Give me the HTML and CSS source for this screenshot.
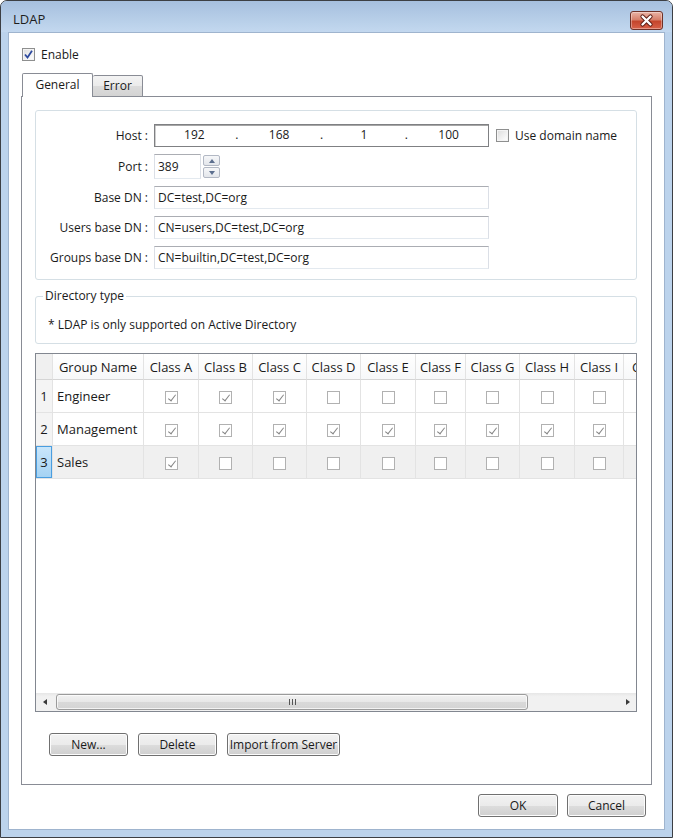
FILE: index.html
```html
<!DOCTYPE html>
<html lang="en">
<head>
  <meta charset="UTF-8" />
  <title>LDAP</title>
  <link rel="stylesheet" href="styles.css">
</head>
<body>

  <div class="window">
    <div class="titlebar">
      <span class="title">LDAP</span>
      <span class="close">
        <svg width="33" height="19" viewBox="0 0 33 19">
          <path d="M12.5 5.5 L20.5 13.5 M20.5 5.5 L12.5 13.5" stroke="#5a1a12" stroke-width="4.2" stroke-linecap="round"/>
          <path d="M12.5 5.5 L20.5 13.5 M20.5 5.5 L12.5 13.5" stroke="#ffffff" stroke-width="2.4" stroke-linecap="round"/>
        </svg>
      </span>
    </div>

    <div class="client">
      <label class="enable">
        <span class="chk">
          <svg width="11" height="11" viewBox="0 0 11 11">
            <path d="M2 5.5 L4.5 8.5 L9 1.8" fill="none" stroke="#2e4a9e" stroke-width="1.8"/>
          </svg>
        </span>
        Enable
      </label>

      <div class="tabs">
        <div class="tab active">General</div>
        <div class="tab">Error</div>
      </div>

      <div class="pane">
        <div class="group conn">
          <span class="lbl">Host :</span>
          <div class="ip">
            <span class="seg">192</span><span class="dot">.</span>
            <span class="seg">168</span><span class="dot">.</span>
            <span class="seg">1</span><span class="dot">.</span>
            <span class="seg">100</span>
          </div>
          <label class="domain"><span class="chk"></span>Use domain name</label>

          <span class="lbl">Port :</span>
          <div class="port">
            <span class="field small">389</span>
            <span class="spin">
              <span class="spin-btn"><i class="up"></i></span>
              <span class="spin-btn"><i class="down"></i></span>
            </span>
          </div>
          <span></span>

          <span class="lbl">Base DN :</span>
          <span class="field">DC=test,DC=org</span>
          <span></span>

          <span class="lbl">Users base DN :</span>
          <span class="field">CN=users,DC=test,DC=org</span>
          <span></span>

          <span class="lbl">Groups base DN :</span>
          <span class="field">CN=builtin,DC=test,DC=org</span>
          <span></span>
        </div>

        <fieldset class="dirtype">
          <legend>Directory type</legend>
          <p>* LDAP is only supported on Active Directory</p>
        </fieldset>

        <div class="grid">
          <div class="grid-view">
            <table>
              <thead>
                <tr>
                  <th class="rh"></th>
                  <th class="c-name">Group Name</th>
                  <th class="c55">Class A</th>
                  <th class="c54">Class B</th>
                  <th class="c54">Class C</th>
                  <th class="c54">Class D</th>
                  <th class="c55">Class E</th>
                  <th class="c50">Class F</th>
                  <th class="c54">Class G</th>
                  <th class="c55">Class H</th>
                  <th class="c49">Class I</th>
                  <th class="c55">Class J</th>
                </tr>
              </thead>
              <tbody>
                <tr>
                  <td class="rh">1</td>
                  <td class="name">Engineer</td>
                  <td><span class="cb on"></span></td>
                  <td><span class="cb on"></span></td>
                  <td><span class="cb on"></span></td>
                  <td><span class="cb"></span></td>
                  <td><span class="cb"></span></td>
                  <td><span class="cb"></span></td>
                  <td><span class="cb"></span></td>
                  <td><span class="cb"></span></td>
                  <td><span class="cb"></span></td>
                  <td><span class="cb"></span></td>
                </tr>
                <tr>
                  <td class="rh">2</td>
                  <td class="name">Management</td>
                  <td><span class="cb on"></span></td>
                  <td><span class="cb on"></span></td>
                  <td><span class="cb on"></span></td>
                  <td><span class="cb on"></span></td>
                  <td><span class="cb on"></span></td>
                  <td><span class="cb on"></span></td>
                  <td><span class="cb on"></span></td>
                  <td><span class="cb on"></span></td>
                  <td><span class="cb on"></span></td>
                  <td><span class="cb"></span></td>
                </tr>
                <tr class="selected">
                  <td class="rh">3</td>
                  <td class="name">Sales</td>
                  <td><span class="cb on"></span></td>
                  <td><span class="cb"></span></td>
                  <td><span class="cb"></span></td>
                  <td><span class="cb"></span></td>
                  <td><span class="cb"></span></td>
                  <td><span class="cb"></span></td>
                  <td><span class="cb"></span></td>
                  <td><span class="cb"></span></td>
                  <td><span class="cb"></span></td>
                  <td><span class="cb"></span></td>
                </tr>
              </tbody>
            </table>
          </div>

          <div class="hscroll">
            <span class="arrow"><i class="left"></i></span>
            <span class="track">
              <span class="thumb"><span class="grip"></span></span>
            </span>
            <span class="arrow"><i class="right"></i></span>
          </div>
        </div>

        <div class="actions">
          <button class="btn w79">New...</button>
          <button class="btn w79">Delete</button>
          <button class="btn w113">Import from Server</button>
        </div>
      </div>

      <div class="footer">
        <button class="btn w80">OK</button>
        <button class="btn w79">Cancel</button>
      </div>
    </div>
  </div>

</body>
</html>
```

FILE: styles.css
```css
* {
  box-sizing: border-box;
}

body {
  margin: 0;
  font-family: 'Open Sans', 'Noto Sans', sans-serif;
  font-size: 12px;
  color: #1a1a1a;
  background: #fff;
}

.window {
  width: 673px;
  height: 838px;
  border: 1px solid #3c3f44;
  border-radius: 7px 7px 0 0;
  background: #bcd3ec;
  overflow: hidden;
}

.titlebar {
  height: 31px;
  display: flex;
  align-items: flex-start;
  justify-content: space-between;
  padding: 9px 9px 0 12px;
  background: linear-gradient(#a6bfde, #bad1ea 70%, #c3d8ef);
}

.title {
  font-size: 13px;
  line-height: 18px;
  color: #1e1e1e;
}

.close {
  display: block;
  width: 33px;
  height: 19px;
  margin-top: 1px;
  border: 1px solid #6e3128;
  border-radius: 3px;
  background: linear-gradient(#e9b3a6, #d7806b 45%, #c4452c 55%, #d8624a);
  box-shadow: inset 0 0 0 1px rgba(255,255,255,0.35);
}

.close svg {
  display: block;
  margin: -1px 0 0 -1px;
}

.client {
  height: 798px;
  margin: 0 7px;
  border: 1px solid #9fb4ce;
  background: #fff;
}

/* checkboxes */
.chk {
  display: inline-flex;
  align-items: center;
  justify-content: center;
  width: 13px;
  height: 13px;
  border: 1px solid #8e8f8f;
  background: linear-gradient(135deg, #dcdcdc, #f6f6f6 70%, #fff);
  box-shadow: inset 0 0 0 1px #f4f4f4;
}

.enable {
  display: flex;
  align-items: center;
  gap: 6px;
  height: 13px;
  margin: 15px 0 0 13px;
}

/* tabs */
.tabs {
  display: flex;
  align-items: flex-end;
  height: 24px;
  margin: 12px 0 -1px 13px;
}

.tab {
  height: 22px;
  width: 50px;
  border: 1px solid #898c95;
  border-left: 0;
  border-radius: 2px 2px 0 0;
  background: linear-gradient(#f3f3f3, #ebebeb 50%, #dcdcdc 51%, #d3d3d3);
  text-align: center;
  line-height: 20px;
}

.tab.active {
  position: relative;
  z-index: 1;
  width: 71px;
  height: 24px;
  border-left: 1px solid #898c95;
  border-bottom: 0;
  background: #fff;
  line-height: 21px;
}

.pane {
  width: 631px;
  height: 689px;
  margin-left: 12px;
  padding: 13px 14px 0 13px;
  border: 1px solid #898c95;
}

.group {
  border: 1px solid #d5dfe5;
  border-radius: 3px;
}

.conn {
  display: grid;
  grid-template-columns: 112px 335px auto;
  column-gap: 6px;
  row-gap: 7px;
  align-items: center;
  padding: 13px 0 10px 0;
}

.lbl {
  text-align: right;
  color: #1a1a1a;
}

.field {
  display: block;
  height: 23px;
  line-height: 21px;
  padding-left: 3px;
  border: 1px solid #dbdfe6;
  border-top-color: #abadb3;
  border-bottom-color: #e3e9ef;
}

.ip {
  display: flex;
  height: 23px;
  line-height: 19px;
  border: 1px solid #7f8083;
  box-shadow: inset 0 1px 0 #a6a6a6, inset 1px 0 0 #cfcfcf;
}

.seg {
  flex: 1;
  text-align: center;
}

.dot {
  width: 6px;
  text-align: center;
}

.domain {
  display: flex;
  align-items: center;
  gap: 6px;
  margin-left: 1px;
}

.port {
  display: flex;
  align-items: center;
  gap: 2px;
  height: 25px;
}

.field.small {
  width: 47px;
  height: 25px;
  line-height: 23px;
}

.spin {
  display: flex;
  flex-direction: column;
  gap: 1px;
  width: 17px;
  height: 23px;
}

.spin-btn {
  flex: 1;
  display: flex;
  align-items: center;
  justify-content: center;
  border: 1px solid #b2b8c4;
  border-radius: 2px;
  background: linear-gradient(#f6f7f9, #e3e6eb);
}

.spin-btn i {
  width: 0;
  height: 0;
  border-left: 3px solid transparent;
  border-right: 3px solid transparent;
}

.spin-btn .up {
  border-bottom: 4px solid #5c6f8f;
}

.spin-btn .down {
  border-top: 4px solid #5c6f8f;
}

/* directory type */
.dirtype {
  margin: 8px 0 0 0;
  padding: 13px 12px 10px 12px;
  border: 1px solid #d5dfe5;
  border-radius: 3px;
}

.dirtype legend {
  margin-left: -5px;
  padding: 0 2px;
  line-height: 16px;
}

.dirtype p {
  margin: 0;
  line-height: 16px;
}

/* group grid */
.grid {
  display: flex;
  flex-direction: column;
  justify-content: space-between;
  height: 359px;
  margin-top: 9px;
  border: 1px solid #828790;
  font-size: 13px;
}

.grid-view {
  overflow: hidden;
}

table {
  width: 643px;
  table-layout: fixed;
  border-collapse: separate;
  border-spacing: 0;
}

th, td {
  padding: 0;
  border-right: 1px solid #e3e3e3;
  border-bottom: 1px solid #e3e3e3;
  text-align: center;
  font-weight: normal;
  white-space: nowrap;
  overflow: hidden;
}

th {
  height: 26px;
  border-bottom-color: #d5d5d5;
  background: linear-gradient(#ffffff, #f7f8f9);
  line-height: 24px;
}

td {
  height: 33px;
}

.rh {
  width: 17px;
  background: #f4f4f4;
  border-right-color: #e3e3e3;
}

th.rh {
  background: #f0f0f0;
}

.c-name { width: 91px; }
.c49 { width: 49px; }
.c50 { width: 50px; }
.c54 { width: 54px; }
.c55 { width: 55px; }

td.name {
  text-align: left;
  padding-left: 4px;
}

tr.selected td {
  background: #f0f0f0;
}

tr.selected td.rh {
  background: linear-gradient(#cbe7fb, #a4d2f3);
  box-shadow: inset 0 0 0 1px #4a9ee0;
}

.cb {
  position: relative;
  display: inline-block;
  width: 13px;
  height: 13px;
  vertical-align: middle;
  border: 1px solid #b1b1b1;
  background: #fff;
}

.cb.on::after {
  content: "";
  position: absolute;
  left: 4px;
  top: 1px;
  width: 3px;
  height: 7px;
  border: solid #858585;
  border-width: 0 1.5px 1.5px 0;
  transform: rotate(38deg);
}

/* scrollbar */
.hscroll {
  display: flex;
  height: 18px;
  background: linear-gradient(#e6e6e6, #f1f1f1 20%, #f1f1f1);
}

.arrow {
  display: flex;
  align-items: center;
  justify-content: center;
  width: 17px;
}

.arrow i {
  width: 0;
  height: 0;
  border-top: 3.5px solid transparent;
  border-bottom: 3.5px solid transparent;
}

.arrow .left {
  border-right: 4px solid #3a3a3a;
}

.arrow .right {
  border-left: 4px solid #3a3a3a;
}

.track {
  flex: 1;
  padding: 1px 0 1px 3px;
}

.thumb {
  display: flex;
  align-items: center;
  justify-content: center;
  width: 472px;
  height: 16px;
  border: 1px solid #9b9b9b;
  border-radius: 3px;
  background: linear-gradient(#f2f2f2, #e7e7e7 50%, #d9d9d9 51%, #d4d4d4);
  box-shadow: inset 0 0 0 1px rgba(255,255,255,0.7);
}

.grip {
  width: 7px;
  height: 6px;
  background: repeating-linear-gradient(90deg, #555 0 1px, transparent 1px 3px);
}

/* buttons */
.btn {
  height: 23px;
  padding: 0;
  border: 1px solid #707070;
  border-radius: 3px;
  background: linear-gradient(#f2f2f2, #ebebeb 50%, #dddddd 51%, #cfcfcf);
  box-shadow: inset 0 0 0 1px #fcfcfc;
  font-family: 'Open Sans', 'Noto Sans', sans-serif;
  font-size: 12px;
  color: #1a1a1a;
}

.w79 { width: 79px; }
.w80 { width: 80px; }
.w113 { width: 113px; }

.actions {
  display: flex;
  gap: 10px;
  margin: 21px 0 0 14px;
}

.footer {
  display: flex;
  justify-content: flex-end;
  gap: 9px;
  margin: 9px 18px 0 0;
}
```
